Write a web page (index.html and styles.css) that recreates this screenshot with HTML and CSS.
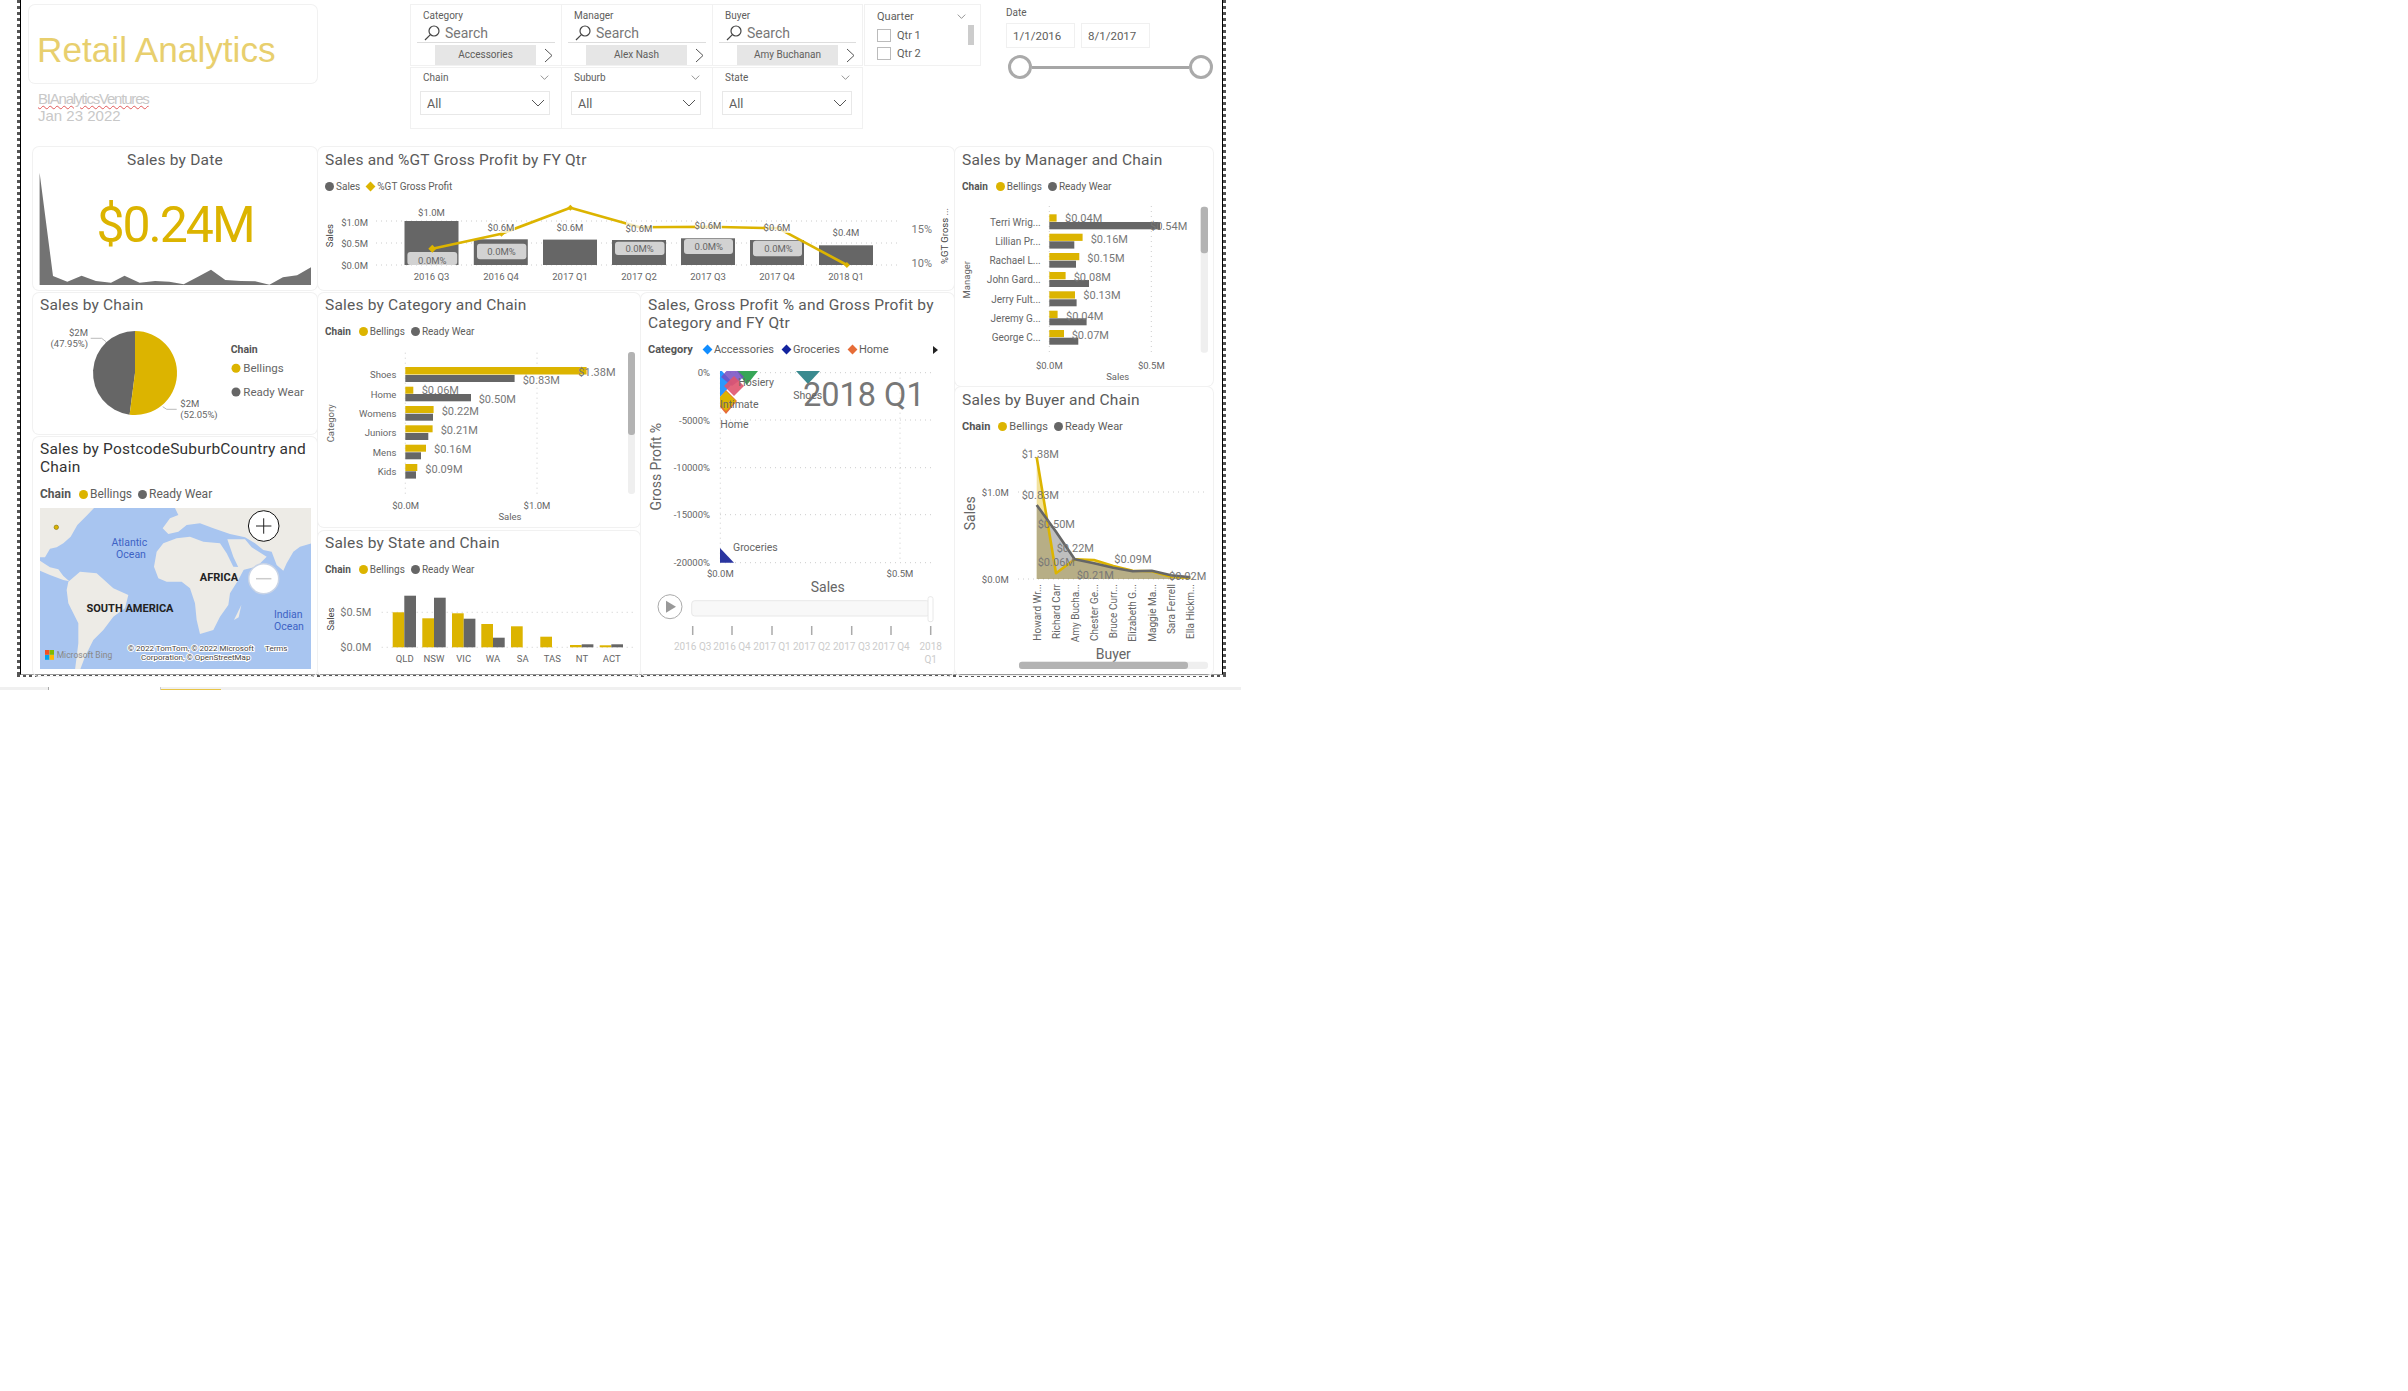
FILE: index.html
```html
<!DOCTYPE html>
<html lang="en">
  <head>
    <meta charset="UTF-8" />
    <meta name="viewport" content="width=device-width, initial-scale=1.0" />
    <title>Retail Analytics</title>
    <link rel="stylesheet" href="styles.css">
  </head>
  <body>
    <svg class="defs">
      <symbol id="glass" viewBox="0 0 16 16"><circle cx="10" cy="6" r="5" fill="none" stroke="#444" stroke-width="1.2"/><path d="M6.4 9.6 1 15" stroke="#444" stroke-width="1.2"/></symbol>
      <symbol id="next" viewBox="0 0 9 15"><path d="M1 1l7 6.5L1 14" fill="none" stroke="#555" stroke-width="1"/></symbol>
      <symbol id="down" viewBox="0 0 14 8"><path d="M1 1l6 6 6-6" fill="none" stroke="#555" stroke-width="1"/></symbol>
    </svg>

    <div class="report">
      <div class="canvas">
        <div class="header">
          <div class="brand">
            <div class="brand-card">Retail Analytics</div>
            <div class="brand-sub"><u>BIAnalyticsVentures</u></div>
            <div class="brand-date">Jan 23 2022</div>
          </div>

          <div class="slicers">
            <div class="slicer">
              <div class="slicer-label">Category</div>
              <div class="search"><svg class="glass"><use href="#glass"/></svg>Search</div>
              <div class="chip-row"><span class="chip">Accessories</span><svg class="next"><use href="#next"/></svg></div>
            </div>
            <div class="slicer">
              <div class="slicer-label">Manager</div>
              <div class="search"><svg class="glass"><use href="#glass"/></svg>Search</div>
              <div class="chip-row"><span class="chip">Alex Nash</span><svg class="next"><use href="#next"/></svg></div>
            </div>
            <div class="slicer">
              <div class="slicer-label">Buyer</div>
              <div class="search"><svg class="glass"><use href="#glass"/></svg>Search</div>
              <div class="chip-row"><span class="chip">Amy Buchanan</span><svg class="next"><use href="#next"/></svg></div>
            </div>
            <div class="slicer">
              <div class="slicer-head"><span>Chain</span><svg class="down-sm"><use href="#down"/></svg></div>
              <div class="dropdown"><span>All</span><svg class="down"><use href="#down"/></svg></div>
            </div>
            <div class="slicer">
              <div class="slicer-head"><span>Suburb</span><svg class="down-sm"><use href="#down"/></svg></div>
              <div class="dropdown"><span>All</span><svg class="down"><use href="#down"/></svg></div>
            </div>
            <div class="slicer">
              <div class="slicer-head"><span>State</span><svg class="down-sm"><use href="#down"/></svg></div>
              <div class="dropdown"><span>All</span><svg class="down"><use href="#down"/></svg></div>
            </div>
          </div>

          <div class="quarter">
            <div class="quarter-head"><span>Quarter</span><svg class="down-sm"><use href="#down"/></svg></div>
            <div class="quarter-body">
              <div class="checks">
                <div class="check"><i></i>Qtr 1</div>
                <div class="check"><i></i>Qtr 2</div>
              </div>
              <div class="quarter-scroll"></div>
            </div>
          </div>

          <div class="date">
            <div class="date-label">Date</div>
            <div class="date-inputs">
              <div class="date-input">1/1/2016</div>
              <div class="date-input">8/1/2017</div>
            </div>
            <div class="slider"><i></i><b></b><i></i></div>
          </div>
        </div>

        <div class="dash">
          <div class="col-left">
            <div class="card card-date">
              <h2 class="title title-center title-top">Sales by Date</h2>
              <svg class="plot" style="height:120px" viewBox="33 170 284 120">
                <path fill="#737373" d="M39.6 172.7 53 276 67.3 281.7 81.6 275.7 95.9 281 111 282.7 124.5 275.7 139.6 282.7 155.1 281 169.4 281.7 183.7 284.3 198 276.7 211 269.7 225.3 280 240.8 281 255.1 281.3 269.4 284.7 282.9 277.3 297.1 275.3 311 267.3V285H39.6Z"/>
                <text class="kpi" x="175" y="224">$0.24M</text>
              </svg>
            </div>

            <div class="card card-chain">
              <h2 class="title">Sales by Chain</h2>
              <svg class="plot" style="height:119px" viewBox="33 315 284 119">
                <path fill="#666" d="M135 373V331A42 42 0 0 0 129.6 414.65Z"/>
                <path fill="#dcb400" d="M135 373V331A42 42 0 1 1 129.6 414.65Z"/>
                <path class="leader" d="M90.7 338.3H101.7L106 341.7M162.7 406.7 166.7 409.3H176.7"/>
                <text class="axis end" x="88" y="332.7">$2M</text>
                <text class="axis end" x="88" y="343.7">(47.95%)</text>
                <text class="axis" x="180.3" y="403.7">$2M</text>
                <text class="axis" x="180.3" y="414.3">(52.05%)</text>
                <text class="lg-head" x="230.7" y="349">Chain</text>
                <circle cx="236" cy="368.3" r="4.5" fill="#dcb400"/>
                <text class="lg-item" x="243.3" y="368.3">Bellings</text>
                <circle cx="236" cy="392" r="4.5" fill="#666"/>
                <text class="lg-item" x="243.3" y="392">Ready Wear</text>
              </svg>
            </div>

            <div class="card card-map">
              <h2 class="title title-dark">Sales by PostcodeSuburbCountry and Chain</h2>
              <div class="legend legend-lg"><b>Chain</b><span class="key"><i class="gold"></i>Bellings</span><span class="key"><i class="grey"></i>Ready Wear</span></div>
              <svg class="plot" style="height:174px" viewBox="33 502 284 174">
                <rect x="40" y="508" width="271" height="161" fill="#a8c5f0"/>
                <clipPath id="mapclip"><rect x="40" y="508" width="271" height="161"/></clipPath>
                <g clip-path="url(#mapclip)">
                  <g transform="translate(0 280) scale(.33333)" fill="#edebe6">
                    <path d="M120 684H282L262 705 232 735 212 770 190 790 170 802 150 806 135 832 120 832Z"/>
                    <path d="M120 842 150 862 175 868 190 888 208 904 190 900 150 885 120 872Z"/>
                    <path d="M205 905 240 875 290 880 340 925 385 945 375 985 340 1010 310 1050 280 1080 255 1130 240 1170 225 1170 235 1090 235 1030 205 970 200 930Z"/>
                    <path d="M462 860 470 815 490 790 530 775 570 770 610 785 660 790 680 820 700 860 735 862 715 900 690 940 685 975 660 1010 640 1050 600 1062 590 1020 585 970 570 925 545 905 500 905 475 895Z"/>
                    <path d="M488 745 510 715 535 705 525 684H935V790L900 800 880 815 860 850 850 872 830 855 815 815 790 810 765 790 735 772 690 762 640 745 600 730 560 735 535 755 505 762Z"/>
                    <path d="M682 778 735 778 755 802 800 830 770 860 720 872 700 830Z"/>
                    <path d="M702 1020 724 975 716 1012Z"/>
                  </g>
                  <path fill="#a8c5f0" d="M254 515 272 518 268 524 254 521Z"/>
                </g>
                <circle cx="56.3" cy="527.3" r="2.2" fill="#dcb400" stroke="#8a7a20" stroke-width=".7"/>
                <text class="sea mid" x="129.3" y="542">Atlantic</text>
                <text class="sea mid" x="131" y="554.3">Ocean</text>
                <text class="sea mid" x="288.3" y="614">Indian</text>
                <text class="sea mid" x="289" y="626.3">Ocean</text>
                <text class="land mid" x="219" y="577.7">AFRICA</text>
                <text class="land mid" x="130" y="608">SOUTH AMERICA</text>
                <rect x="45" y="650" width="4.4" height="4.8" fill="#f25022"/>
                <rect x="49.6" y="650" width="4.4" height="4.8" fill="#7fba00"/>
                <rect x="45" y="655" width="4.4" height="4.8" fill="#00a4ef"/>
                <rect x="49.6" y="655" width="4.4" height="4.8" fill="#ffb900"/>
                <text class="bing" x="56.7" y="655">Microsoft Bing</text>
                <text class="copy" x="127.7" y="648.3">© 2022 TomTom, © 2022 Microsoft</text>
                <text class="copy" x="265" y="648.3">Terms</text>
                <text class="copy" x="141" y="657.3">Corporation, © OpenStreetMap</text>
                <circle cx="263.7" cy="526" r="15.3" fill="#fff" stroke="#111" stroke-width="1"/>
                <path d="M256 526H271.4M263.7 518.3V533.7" stroke="#222" stroke-width="1"/>
                <circle cx="263.7" cy="578.7" r="15" fill="#fff" stroke="#c9d4e6" stroke-width="1.5"/>
                <path d="M256 578.7H271.4" stroke="#ccc" stroke-width="1.5"/>
              </svg>
            </div>
          </div>

          <div class="col-mid">
            <div class="card card-gt">
              <h2 class="title title-top">Sales and %GT Gross Profit by FY Qtr</h2>
              <div class="legend"><span class="key"><i class="grey"></i>Sales</span><span class="key"><i class="diamond gold"></i>%GT Gross Profit</span></div>
              <svg class="plot" style="height:95px" viewBox="318 195 636 95">
                <path class="grid" d="M376 221H899M376 243H899M376 265H899"/>
                <g fill="#666">
                  <rect x="404.5" y="221" width="54" height="44"/>
                  <rect x="473.8" y="239.3" width="54" height="25.7"/>
                  <rect x="543" y="239.6" width="54" height="25.4"/>
                  <rect x="612" y="240" width="54" height="25"/>
                  <rect x="681" y="238.3" width="54" height="26.7"/>
                  <rect x="750" y="240" width="54" height="25"/>
                  <rect x="819" y="245.3" width="54" height="19.7"/>
                </g>
                <g class="pill">
                  <rect x="407.4" y="252" width="49.8" height="13" rx="3"/>
                  <rect x="477" y="243.7" width="49.4" height="15.6" rx="3"/>
                  <rect x="615" y="241.7" width="49.5" height="13.3" rx="3"/>
                  <rect x="684" y="239" width="49" height="15" rx="3"/>
                  <rect x="753" y="240.7" width="49" height="15.6" rx="3"/>
                </g>
                <text class="axis mid" x="432.3" y="260">0.0M%</text>
                <text class="axis mid" x="501.5" y="251.5">0.0M%</text>
                <text class="axis mid" x="639.6" y="248">0.0M%</text>
                <text class="axis mid" x="708.8" y="246.7">0.0M%</text>
                <text class="axis mid" x="778.5" y="248.5">0.0M%</text>
                <path class="gt-line" d="M432.3 248.7 501.5 233.7 570.4 207.7 639.6 227.3 708.8 226.7 778.5 228.3 846.9 265"/>
                <g fill="#dcb400">
                  <path d="M432.3 244.7l4 4-4 4-4-4Z"/>
                  <path d="M501.5 230.7l3 3-3 3-3-3Z"/>
                  <path d="M570.4 204.7l3 3-3 3-3-3Z"/>
                  <path d="M846.9 262l3 3-3 3-3-3Z"/>
                </g>
                <g fill="#fff" opacity=".72">
                  <rect x="488" y="222" width="27" height="11"/>
                  <rect x="626" y="222" width="27" height="11"/>
                  <rect x="695" y="221" width="27" height="11"/>
                  <rect x="765" y="222" width="27" height="11"/>
                </g>
                <text class="axis mid" x="431.5" y="212.7">$1.0M</text>
                <text class="axis mid" x="501" y="227.3">$0.6M</text>
                <text class="axis mid" x="570" y="227.3">$0.6M</text>
                <text class="axis mid" x="639" y="228">$0.6M</text>
                <text class="axis mid" x="708" y="225.7">$0.6M</text>
                <text class="axis mid" x="777" y="227.7">$0.6M</text>
                <text class="axis mid" x="846" y="232.7">$0.4M</text>
                <text class="axis end" x="368" y="222">$1.0M</text>
                <text class="axis end" x="368" y="243.7">$0.5M</text>
                <text class="axis end" x="368" y="265.5">$0.0M</text>
                <text class="axis mid" x="431.5" y="276.7">2016 Q3</text>
                <text class="axis mid" x="501" y="276.7">2016 Q4</text>
                <text class="axis mid" x="570" y="276.7">2017 Q1</text>
                <text class="axis mid" x="639" y="276.7">2017 Q2</text>
                <text class="axis mid" x="708" y="276.7">2017 Q3</text>
                <text class="axis mid" x="777" y="276.7">2017 Q4</text>
                <text class="axis mid" x="846" y="276.7">2018 Q1</text>
                <text class="axis-title mid" transform="translate(329.5 235.7) rotate(-90)">Sales</text>
                <text class="val end" x="932" y="229">15%</text>
                <text class="val end" x="932" y="263">10%</text>
                <text class="axis-title mid" transform="translate(944 236) rotate(-90)">%GT Gross ...</text>
              </svg>
            </div>

            <div class="mid-row">
              <div class="col-cat">
                <div class="card card-cat">
                  <h2 class="title">Sales by Category and Chain</h2>
                  <div class="legend"><b>Chain</b><span class="key"><i class="gold"></i>Bellings</span><span class="key"><i class="grey"></i>Ready Wear</span></div>
                  <svg class="plot" style="height:187px" viewBox="318 340 322 187">
                    <path class="grid" d="M405.3 352.7V495M537 352.7V495"/>
                    <g fill="#dcb400">
                      <rect x="405.3" y="367" width="181.3" height="7.5"/>
                      <rect x="405.3" y="386.7" width="8" height="7"/>
                      <rect x="405.3" y="406" width="28.3" height="7"/>
                      <rect x="405.3" y="425.3" width="27.3" height="7"/>
                      <rect x="405.3" y="444.7" width="20.7" height="7"/>
                      <rect x="405.3" y="464" width="12" height="7"/>
                    </g>
                    <g fill="#666">
                      <rect x="405.3" y="375" width="109.3" height="7"/>
                      <rect x="405.3" y="394" width="65.7" height="7.3"/>
                      <rect x="405.3" y="413.7" width="27.7" height="7"/>
                      <rect x="405.3" y="433" width="23" height="7"/>
                      <rect x="405.3" y="452.3" width="15.7" height="7"/>
                      <rect x="405.3" y="471.3" width="10.7" height="7.3"/>
                    </g>
                    <text class="axis end" x="396.3" y="374.7">Shoes</text>
                    <text class="axis end" x="396.3" y="394.7">Home</text>
                    <text class="axis end" x="396.3" y="413.7">Womens</text>
                    <text class="axis end" x="396.3" y="432.7">Juniors</text>
                    <text class="axis end" x="396.3" y="452.7">Mens</text>
                    <text class="axis end" x="396.3" y="471.7">Kids</text>
                    <text class="val" x="578.3" y="372">$1.38M</text>
                    <text class="val" x="522.7" y="380">$0.83M</text>
                    <text class="val" x="421.7" y="390.7">$0.06M</text>
                    <text class="val" x="478.7" y="399">$0.50M</text>
                    <text class="val" x="441.7" y="411">$0.22M</text>
                    <text class="val" x="440.7" y="430">$0.21M</text>
                    <text class="val" x="434" y="449">$0.16M</text>
                    <text class="val" x="425.3" y="469">$0.09M</text>
                    <text class="axis mid" x="405.7" y="505.7">$0.0M</text>
                    <text class="axis mid" x="537" y="505.7">$1.0M</text>
                    <text class="axis mid" x="510" y="516.7">Sales</text>
                    <text class="axis mid" transform="translate(330 423.3) rotate(-90)">Category</text>
                    <rect class="track" x="628" y="352" width="7" height="142" rx="3"/>
                    <rect class="thumb" x="628" y="352" width="7" height="83" rx="3"/>
                  </svg>
                </div>

                <div class="card card-state">
                  <h2 class="title">Sales by State and Chain</h2>
                  <div class="legend"><b>Chain</b><span class="key"><i class="gold"></i>Bellings</span><span class="key"><i class="grey"></i>Ready Wear</span></div>
                  <svg class="plot" style="height:98px" viewBox="318 578 322 98">
                    <path class="grid" d="M381.7 612.3H635M381.7 647.3H635"/>
                    <g fill="#dcb400">
                      <rect x="392.7" y="612.3" width="11.6" height="35"/>
                      <rect x="422.3" y="618.3" width="11.7" height="29"/>
                      <rect x="452" y="613.3" width="11.7" height="34"/>
                      <rect x="481.3" y="624" width="11.7" height="23.3"/>
                      <rect x="511" y="626.3" width="11.7" height="21"/>
                      <rect x="540.3" y="636.7" width="11.7" height="10.6"/>
                      <rect x="570" y="645" width="11.7" height="2.3"/>
                      <rect x="599.7" y="645.3" width="11.6" height="2"/>
                    </g>
                    <g fill="#666">
                      <rect x="404.3" y="595.7" width="11.7" height="51.6"/>
                      <rect x="434" y="597.7" width="11.7" height="49.6"/>
                      <rect x="463.7" y="618.7" width="11.7" height="28.6"/>
                      <rect x="493" y="637.7" width="11.7" height="9.6"/>
                      <rect x="581.7" y="644.3" width="11.7" height="3"/>
                      <rect x="611.3" y="644.3" width="11.7" height="3"/>
                    </g>
                    <text class="val end" x="371.3" y="612">$0.5M</text>
                    <text class="val end" x="371.3" y="647">$0.0M</text>
                    <text class="axis mid" x="404.7" y="658.7">QLD</text>
                    <text class="axis mid" x="434" y="658.7">NSW</text>
                    <text class="axis mid" x="463.7" y="658.7">VIC</text>
                    <text class="axis mid" x="493" y="658.7">WA</text>
                    <text class="axis mid" x="522.7" y="658.7">SA</text>
                    <text class="axis mid" x="552.3" y="658.7">TAS</text>
                    <text class="axis mid" x="582" y="658.7">NT</text>
                    <text class="axis mid" x="611.7" y="658.7">ACT</text>
                    <text class="axis-title mid" transform="translate(330 619) rotate(-90)">Sales</text>
                  </svg>
                </div>
              </div>

              <div class="card card-scatter">
                <h2 class="title">Sales, Gross Profit % and Gross Profit by Category and FY Qtr</h2>
                <div class="legend legend-md"><b>Category</b><span class="key key-wide"><i class="diamond blue"></i>Accessories</span><span class="key key-wide"><i class="diamond navy"></i>Groceries</span><span class="key key-wide"><i class="diamond orange"></i>Home</span></div>
                <span class="legend-more"></span>
                <svg class="plot" style="height:319px" viewBox="641 357 313 319">
                  <path class="grid" d="M720 372.7H935M720 420H935M720 467.7H935M720 514.7H935M720 562.7H935M720.3 372.7V562.7M900 372.7V562.7"/>
                  <clipPath id="scatterclip"><rect x="720" y="371" width="215" height="192"/></clipPath>
                  <g clip-path="url(#scatterclip)">
                    <path fill="#118dff" opacity=".9" d="M720 369 733 383 720 397 707 383Z"/>
                    <path fill="#37a657" d="M737 371H758L746.7 385Z"/>
                    <path fill="#744ec2" opacity=".85" d="M732 365 744 377 732 386 721 377Z"/>
                    <path fill="#e0546e" opacity=".9" d="M734 376 744 386 734 396 724 386Z"/>
                    <path fill="#e66c37" d="M726 390 737 401 726 414 716 402Z"/>
                    <path fill="#dcb400" d="M726 391 736 401 726 411 716 401Z"/>
                    <path fill="#3a8a8f" d="M796 371H820L808 384Z"/>
                    <path fill="#2a35a0" d="M720 548 734 562.7H720Z"/>
                  </g>
                  <text class="big" x="803" y="395">2018 Q1</text>
                  <text class="point" x="738.3" y="382.3">Hosiery</text>
                  <text class="point" x="793.3" y="395">Shoes</text>
                  <text class="point" x="720" y="404">Intimate</text>
                  <text class="point" x="720.3" y="424">Home</text>
                  <text class="point" x="733" y="547">Groceries</text>
                  <text class="axis end" x="710" y="372.7">0%</text>
                  <text class="axis end" x="710" y="420">-5000%</text>
                  <text class="axis end" x="710" y="467.7">-10000%</text>
                  <text class="axis end" x="710" y="514.7">-15000%</text>
                  <text class="axis end" x="710" y="562.7">-20000%</text>
                  <text class="axis mid" x="720.3" y="573.7">$0.0M</text>
                  <text class="axis mid" x="900" y="573.7">$0.5M</text>
                  <text class="title-lg mid" x="827.7" y="586.7">Sales</text>
                  <text class="title-lg mid" transform="translate(656 466.7) rotate(-90)">Gross Profit %</text>
                  <circle cx="670" cy="606.7" r="12" fill="#fff" stroke="#aaa"/>
                  <path fill="#999" d="M666 600.7 676 606.7 666 612.7Z"/>
                  <rect x="691.7" y="600.7" width="238" height="15.3" rx="3" fill="#f8f8f8" stroke="#e8e8e8"/>
                  <rect x="928" y="596.7" width="5" height="25" rx="2" fill="#fff" stroke="#e8e8e8"/>
                  <path d="M692.7 626V635M732 626V635M772 626V635M811.7 626V635M851.7 626V635M891 626V635M930.7 626V635" stroke="#aaa" stroke-width="1.5"/>
                  <text class="tick mid" x="692.7" y="646.7">2016 Q3</text>
                  <text class="tick mid" x="732" y="646.7">2016 Q4</text>
                  <text class="tick mid" x="772" y="646.7">2017 Q1</text>
                  <text class="tick mid" x="811.7" y="646.7">2017 Q2</text>
                  <text class="tick mid" x="851.7" y="646.7">2017 Q3</text>
                  <text class="tick mid" x="891" y="646.7">2017 Q4</text>
                  <text class="tick mid" x="930.7" y="646.7">2018</text>
                  <text class="tick mid" x="930.7" y="659.7">Q1</text>
                </svg>
              </div>
            </div>
          </div>

          <div class="col-right">
            <div class="card card-mgr">
              <h2 class="title title-top">Sales by Manager and Chain</h2>
              <div class="legend"><b>Chain</b><span class="key"><i class="gold"></i>Bellings</span><span class="key"><i class="grey"></i>Ready Wear</span></div>
              <svg class="plot" style="height:191px" viewBox="955 195 258 191">
                <path class="grid" d="M1049.3 206V353M1151.3 206V353"/>
                <g fill="#dcb400">
                  <rect x="1049.3" y="214.3" width="7.3" height="7.3"/>
                  <rect x="1049.3" y="233.7" width="33.3" height="7.2"/>
                  <rect x="1049.3" y="253" width="30" height="7.2"/>
                  <rect x="1049.3" y="272" width="16.3" height="7.3"/>
                  <rect x="1049.3" y="291.3" width="25.7" height="7.3"/>
                  <rect x="1049.3" y="310.7" width="8.3" height="7.3"/>
                  <rect x="1049.3" y="330" width="14.7" height="7.2"/>
                </g>
                <g fill="#666">
                  <rect x="1049.3" y="222" width="110.7" height="7.3"/>
                  <rect x="1049.3" y="241.3" width="25" height="7.3"/>
                  <rect x="1049.3" y="260.7" width="26.7" height="7"/>
                  <rect x="1049.3" y="280" width="39.7" height="7"/>
                  <rect x="1049.3" y="299.3" width="27.3" height="7"/>
                  <rect x="1049.3" y="318.3" width="37.3" height="7"/>
                  <rect x="1049.3" y="337.7" width="29" height="7"/>
                </g>
                <g class="mgr-names">
                  <text x="1040.7" y="222.3">Terri Wrig...</text>
                  <text x="1040.7" y="241.3">Lillian Pr...</text>
                  <text x="1040.7" y="260.7">Rachael L...</text>
                  <text x="1040.7" y="279.7">John Gard...</text>
                  <text x="1040.7" y="299.3">Jerry Fult...</text>
                  <text x="1040.7" y="318.7">Jeremy G...</text>
                  <text x="1040.7" y="337.7">George C...</text>
                </g>
                <text class="val" x="1065" y="218.7">$0.04M</text>
                <text class="val" x="1150" y="226.7">$0.54M</text>
                <text class="val" x="1090.7" y="239">$0.16M</text>
                <text class="val" x="1087.3" y="258">$0.15M</text>
                <text class="val" x="1073.7" y="277">$0.08M</text>
                <text class="val" x="1083.3" y="295.7">$0.13M</text>
                <text class="val" x="1066" y="316">$0.04M</text>
                <text class="val" x="1071.7" y="335">$0.07M</text>
                <text class="axis mid" x="1049.3" y="365">$0.0M</text>
                <text class="axis mid" x="1151.3" y="365">$0.5M</text>
                <text class="axis mid" x="1117.7" y="376">Sales</text>
                <text class="axis mid" transform="translate(966.7 279.7) rotate(-90)">Manager</text>
                <rect class="track" x="1200.7" y="206.7" width="7.3" height="146" rx="3"/>
                <rect class="thumb" x="1200.7" y="206.7" width="7.3" height="46.6" rx="3"/>
              </svg>
            </div>

            <div class="card card-buyer">
              <h2 class="title title-top">Sales by Buyer and Chain</h2>
              <div class="legend legend-md"><b>Chain</b><span class="key"><i class="gold"></i>Bellings</span><span class="key"><i class="grey"></i>Ready Wear</span></div>
              <svg class="plot" style="height:242px" viewBox="955 433 258 242">
                <path class="grid" d="M1018 492H1206M1018 579H1206"/>
                <path fill="#dcb400" opacity=".38" d="M1036.7 457.3 1056 573.3 1074.7 559.3 1094 560 1113.3 566 1132.7 570.7 1151.7 571.3 1171 576.7 1190.3 578V579H1036.7Z"/>
                <path fill="#666" opacity=".42" d="M1036.7 505 1056 531.7 1074.7 559.3 1094 563.3 1113.3 567.7 1132.7 571.3 1151.7 570.7 1171 575.3 1190.3 577.3V579H1036.7Z"/>
                <path class="line-gold" d="M1036.7 457.3 1056 573.3 1074.7 559.3 1094 560 1113.3 566 1132.7 570.7 1151.7 571.3 1171 576.7 1190.3 578"/>
                <path class="line-grey" d="M1036.7 505 1056 531.7 1074.7 559.3 1094 563.3 1113.3 567.7 1132.7 571.3 1151.7 570.7 1171 575.3 1190.3 577.3"/>
                <text class="axis end" x="1008.7" y="492.7">$1.0M</text>
                <text class="axis end" x="1008.7" y="579.3">$0.0M</text>
                <text class="val" x="1021.7" y="454">$1.38M</text>
                <text class="val" x="1021.7" y="495">$0.83M</text>
                <text class="val" x="1037.7" y="524">$0.50M</text>
                <text class="val" x="1056.7" y="548">$0.22M</text>
                <text class="val" x="1037.7" y="562.3">$0.06M</text>
                <text class="val" x="1114.3" y="559">$0.09M</text>
                <text class="val" x="1076.7" y="575">$0.21M</text>
                <text class="val" x="1169" y="576">$0.02M</text>
                <g class="buyer-names">
                  <text transform="translate(1037.3 584) rotate(-90)">Howard Wr...</text>
                  <text transform="translate(1056 584) rotate(-90)">Richard Carr</text>
                  <text transform="translate(1075.3 584) rotate(-90)">Amy Bucha...</text>
                  <text transform="translate(1094.3 584) rotate(-90)">Chester Ge...</text>
                  <text transform="translate(1113.3 584) rotate(-90)">Bruce Curr...</text>
                  <text transform="translate(1132.7 584) rotate(-90)">Elizabeth G...</text>
                  <text transform="translate(1152.3 584) rotate(-90)">Maggie Ma...</text>
                  <text transform="translate(1171.7 584) rotate(-90)">Sara Ferrell</text>
                  <text transform="translate(1190.7 584) rotate(-90)">Ella Hickm...</text>
                </g>
                <text class="title-lg mid" x="1113.3" y="654.3">Buyer</text>
                <text class="title-lg mid" transform="translate(970 513.3) rotate(-90)">Sales</text>
                <rect class="track" x="1019" y="661.7" width="189" height="7.3" rx="3"/>
                <rect class="thumb" x="1019" y="661.7" width="169" height="7.3" rx="3"/>
              </svg>
            </div>
          </div>
        </div>
      </div>
    </div>

    <div class="tabs">
      <div class="tab-first"></div>
      <div class="tab-blank"></div>
      <div class="tab-active"></div>
      <div class="tab-rest"></div>
    </div>
  </body>
</html>
```

FILE: styles.css
```css
* {
  box-sizing: border-box;
}
body {
  margin: 0;
  background: white;
  font-family: Roboto, "Liberation Sans", sans-serif;
  color: #605e5c;
}
.defs {
  display: none;
}

/* report frame: dashes outside, thin line inside */
.report {
  width: 1209px;
  height: 677px;
  margin-left: 17px;
  padding: 0 3px 2px;
  background:
    repeating-linear-gradient(180deg, #555 0 3px, transparent 3px 6px) left top / 3px 100% no-repeat,
    repeating-linear-gradient(180deg, #555 0 3px, transparent 3px 6px) right top / 3px 100% no-repeat,
    repeating-linear-gradient(90deg, #555 0 3px, transparent 3px 6px) left bottom / 100% 2px no-repeat;
}
.canvas {
  height: 100%;
  padding: 5px 0 0 8px;
  border-left: 1px solid #000;
  border-right: 1px solid #000;
  border-bottom: 1px solid #999;
}

/* top row */
.header {
  display: flex;
  height: 123px;
  margin-bottom: 19px;
}
.brand {
  width: 288px;
}
.brand-card {
  display: flex;
  align-items: center;
  height: 78px;
  padding: 11px 0 0 8px;
  border-radius: 6px;
  box-shadow: 0 0 0 1px #f1f1f1;
  font-family: "Liberation Sans", Arial, sans-serif;
  font-size: 35.2px;
  color: #e8cf6e;
}
.brand-sub,
.brand-date {
  height: 17px;
  padding-left: 9px;
  font-family: "Liberation Sans", Arial, sans-serif;
  font-size: 15px;
  line-height: 17px;
  color: #c8c8c8;
}
.brand-sub {
  margin-top: 7px;
  letter-spacing: -1.2px;
}
.brand-sub u {
  text-decoration: underline wavy #e25a5a 1px;
}
.slicers {
  display: grid;
  grid-template-columns: 150px 150px 149px;
  grid-auto-rows: 60px;
  gap: 3px 1px;
  margin-left: 94px;
}
.slicer {
  padding: 5px 6px 0;
  box-shadow: 0 0 0 1px #f1f1f1;
  font-size: 10px;
}
.slicer-label {
  height: 13px;
  padding-left: 6px;
  line-height: 12px;
}
.search {
  display: flex;
  align-items: center;
  gap: 5px;
  height: 20px;
  padding-left: 7px;
  border-bottom: 1px solid #ddd;
  font-size: 14px;
  color: #777;
}
.glass {
  width: 16px;
  height: 16px;
}
.chip-row {
  display: flex;
  align-items: center;
  gap: 8px;
  height: 20px;
  margin-top: 2px;
  padding-left: 18px;
}
.chip {
  width: 101px;
  height: 20px;
  background: #e6e6e6;
  text-align: center;
  line-height: 20px;
}
.next {
  width: 9px;
  height: 15px;
}
.slicer-head {
  display: flex;
  justify-content: space-between;
  align-items: center;
  height: 13px;
  margin-top: -2px;
  padding: 0 6px;
}
.down-sm {
  width: 9px;
  height: 5px;
}
.dropdown {
  display: flex;
  justify-content: space-between;
  align-items: center;
  width: 130px;
  height: 24px;
  margin: 7px 0 0 3px;
  padding: 0 4px 0 6px;
  border: 1px solid #e8e8e8;
  font-size: 12.5px;
}
.down {
  width: 14px;
  height: 8px;
}
.quarter {
  width: 115px;
  height: 60px;
  margin-left: 3px;
  padding: 4px 6px 0 12px;
  box-shadow: 0 0 0 1px #f1f1f1;
  font-size: 11px;
}
.quarter-head {
  display: flex;
  justify-content: space-between;
  align-items: center;
  height: 14px;
  padding-right: 8px;
}
.quarter-body {
  display: flex;
  justify-content: space-between;
  margin-top: 2px;
}
.checks {
  display: flex;
  flex-direction: column;
  gap: 5px;
  padding-top: 4px;
}
.check {
  display: flex;
  align-items: center;
  gap: 6px;
  height: 13px;
  font-size: 11px;
}
.check i {
  width: 14px;
  height: 13px;
  border: 1px solid #bbb;
}
.quarter-scroll {
  width: 6px;
  height: 20px;
  background: #ccc;
}
.date {
  width: 207px;
  margin-left: 26px;
  font-size: 10px;
}
.date-label {
  height: 13px;
  margin-top: 1px;
  line-height: 13px;
}
.date-inputs {
  display: flex;
  gap: 6px;
  margin-top: 4px;
}
.date-input {
  width: 69px;
  height: 25px;
  padding: 1px 0 0 6px;
  border: 1px solid #f0f0f0;
  font-size: 11.5px;
  line-height: 23px;
}
.slider {
  display: flex;
  align-items: center;
  margin-top: 7px;
  margin-left: 2px;
}
.slider i {
  flex: none;
  width: 24px;
  height: 24px;
  border: 3px solid #aaa;
  border-radius: 50%;
  background: white;
}
.slider b {
  flex: 1;
  height: 3px;
  background: #a6a6a6;
}

/* cards */
.dash {
  display: flex;
  gap: 1px;
  margin-left: 4px;
}
.col-left,
.col-cat {
  display: flex;
  flex-direction: column;
}
.col-left {
  width: 284px;
  gap: 3px;
}
.col-mid {
  display: flex;
  flex-direction: column;
  gap: 3px;
  width: 636px;
}
.col-right {
  display: flex;
  flex-direction: column;
  gap: 1px;
  width: 258px;
}
.mid-row {
  display: flex;
  gap: 1px;
}
.col-cat {
  width: 322px;
  gap: 4px;
}
.card {
  position: relative;
  display: flex;
  flex-direction: column;
  border-radius: 6px;
  box-shadow: 0 0 0 1px #f1f1f1;
}
.card-date,
.card-gt {
  height: 143px;
}
.card-chain {
  height: 141px;
}
.card-map {
  height: 239px;
}
.card-cat {
  height: 234px;
}
.card-state {
  height: 145px;
}
.card-scatter {
  width: 313px;
  height: 383px;
}
.card-mgr {
  height: 239px;
}
.card-buyer {
  height: 288px;
}
.title {
  margin: 0;
  padding: 3px 7px 0;
  font-size: 15.5px;
  font-weight: 400;
  line-height: 18px;
  letter-spacing: .2px;
  color: #5a5a5a;
}
.title-top {
  padding-top: 4px;
}
.title-center {
  text-align: center;
}
.title-dark {
  color: #333;
}
.legend {
  display: flex;
  align-items: center;
  height: 14px;
  margin-top: 10px;
  padding-left: 7px;
  font-size: 10px;
}
.legend b {
  margin-right: 2px;
  color: #555;
  font-weight: 700;
}
.legend-md {
  font-size: 11px;
}
.legend-lg {
  margin-top: 11px;
  font-size: 12px;
}
.key {
  display: flex;
  align-items: center;
  gap: 2px;
  margin-left: 6px;
}
.legend .key:first-child {
  margin-left: 0;
}
.key-wide {
  margin-left: 8px;
}
.key i {
  width: 9px;
  height: 9px;
  border-radius: 50%;
}
.key i.diamond {
  width: 7px;
  height: 7px;
  margin: 0 1px;
  border-radius: 0;
  transform: rotate(45deg);
}
.gold {
  background: #dcb400;
}
.grey {
  background: #666;
}
.blue {
  background: #118dff;
}
.navy {
  background: #12239e;
}
.orange {
  background: #e66c37;
}
.legend-more {
  position: absolute;
  top: 53px;
  left: 292px;
  border-left: 5px solid #222;
  border-top: 4.5px solid transparent;
  border-bottom: 4.5px solid transparent;
}
.plot {
  display: block;
  flex: none;
  width: 100%;
  margin-top: auto;
}

/* chart text */
.plot text {
  dominant-baseline: central;
  fill: #666;
  font-size: 10px;
}
.plot .end {
  text-anchor: end;
}
.plot .mid {
  text-anchor: middle;
}
.plot .axis {
  font-size: 9.5px;
}
.plot .axis-title {
  font-size: 9.5px;
  fill: #444;
}
.plot .val {
  font-size: 11px;
  fill: #777;
}
.plot .point {
  font-size: 10.5px;
}
.plot .title-lg {
  font-size: 14px;
}
.plot .tick {
  fill: #ccc;
}
.plot .kpi {
  font-size: 50px;
  letter-spacing: -2px;
  text-anchor: middle;
  fill: #dcb400;
  dominant-baseline: auto;
  transform: translateY(18px);
}
.plot .big {
  font-size: 32.5px;
  fill: #777;
}
.plot .lg-head {
  font-size: 10.5px;
  font-weight: 700;
  fill: #555;
}
.plot .lg-item {
  font-size: 11.5px;
}
.plot .sea {
  font-size: 10.5px;
  fill: #3d62c4;
}
.plot .land {
  font-size: 11px;
  font-weight: 700;
  fill: #222;
}
.plot .bing {
  font-size: 8.5px;
  fill: #888;
}
.plot .copy {
  font-size: 8px;
  fill: #444;
  stroke: #fff;
  stroke-width: 2px;
  paint-order: stroke;
}
.mgr-names text {
  font-size: 10px;
  text-anchor: end;
}
.buyer-names text {
  font-size: 10px;
  text-anchor: end;
}
.grid {
  fill: none;
  stroke: #ccc;
  stroke-width: 1;
  stroke-dasharray: 1 4;
}
.leader {
  fill: none;
  stroke: #bbb;
  stroke-width: 1;
}
.pill rect {
  fill: #d2d2d2;
}
.gt-line,
.line-gold,
.line-grey {
  fill: none;
  stroke-width: 2.6;
  stroke-linejoin: round;
}
.gt-line,
.line-gold {
  stroke: #dcb400;
}
.line-grey {
  stroke: #666;
}
.track {
  fill: #efefef;
}
.thumb {
  fill: #b3b3b3;
}

/* page tabs */
.tabs {
  display: flex;
  width: 1241px;
  height: 3px;
  margin-top: 10px;
}
.tab-first {
  width: 49px;
  background: #f0f0f0;
  border-right: 1px solid #aaa;
}
.tab-blank {
  width: 112px;
  border-right: 1px solid #ccc;
}
.tab-active {
  width: 60px;
  background: #f0f0f0;
  border-bottom: 1px solid #e8c547;
}
.tab-rest {
  flex: 1;
  background: #f0f0f0;
}
```
